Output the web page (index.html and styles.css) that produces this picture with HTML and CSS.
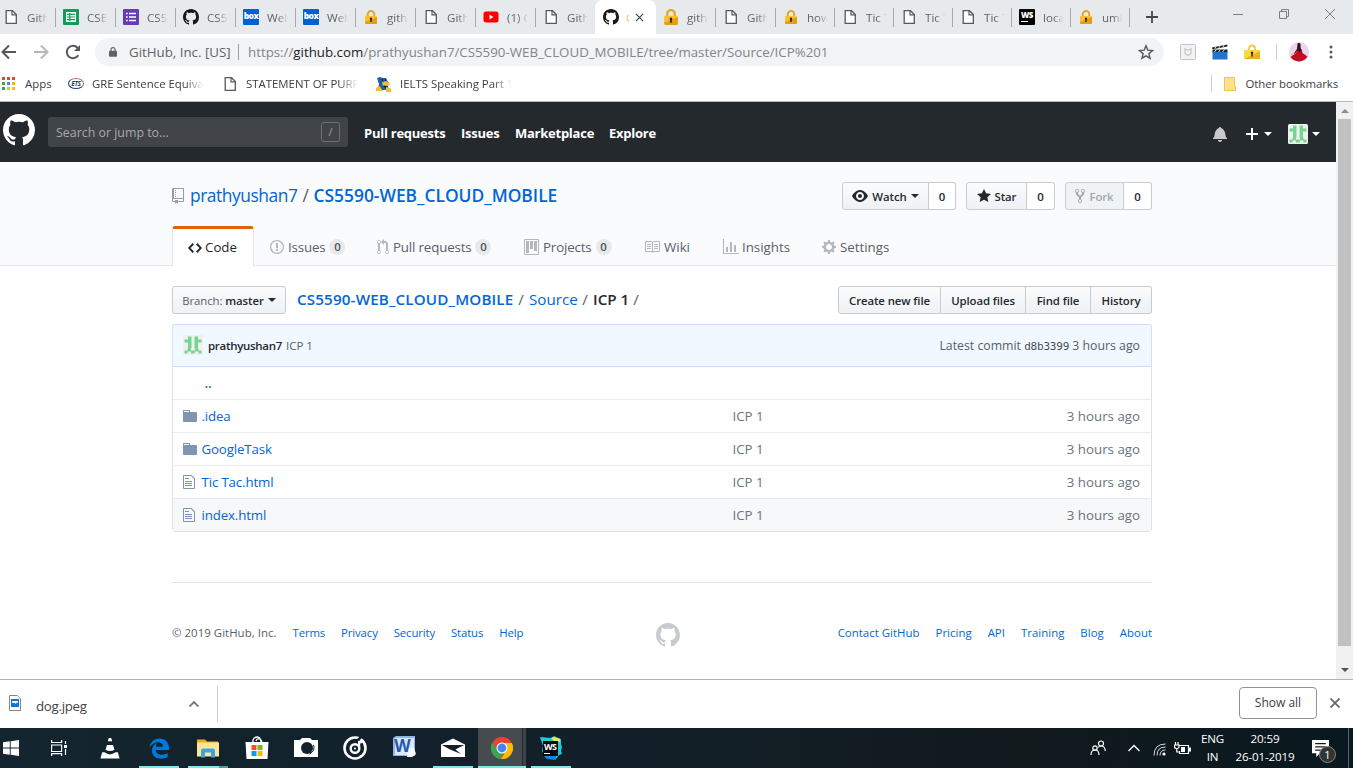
FILE: index.html
```html
<!DOCTYPE html>
<html lang="en">
<head>
<meta charset="utf-8">
<title>CS5590-WEB_CLOUD_MOBILE/Source/ICP 1</title>
<link rel="stylesheet" href="styles.css">
</head>
<body>
<svg class="sprite" aria-hidden="true">
  <symbol id="github" viewBox="0 0 16 16"><path fill-rule="evenodd" d="M8 0C3.58 0 0 3.58 0 8c0 3.54 2.29 6.53 5.47 7.59.4.07.55-.17.55-.38 0-.19-.01-.82-.01-1.49-2.01.37-2.53-.49-2.69-.94-.09-.23-.48-.94-.82-1.13-.28-.15-.68-.52-.01-.53.63-.01 1.08.58 1.23.82.72 1.21 1.87.87 2.33.66.07-.52.28-.87.51-1.07-1.78-.2-3.64-.89-3.64-3.95 0-.87.31-1.59.82-2.15-.08-.2-.36-1.02.08-2.12 0 0 .67-.21 2.2.82.64-.18 1.32-.27 2-.27.68 0 1.36.09 2 .27 1.53-1.04 2.2-.82 2.2-.82.44 1.1.16 1.92.08 2.12.51.56.82 1.27.82 2.15 0 3.07-1.87 3.75-3.65 3.95.29.25.54.73.54 1.48 0 1.07-.01 1.93-.01 2.2 0 .21.15.46.55.38A8.013 8.013 0 0 0 16 8c0-4.42-3.58-8-8-8z"/></symbol>
  <symbol id="page" viewBox="0 0 16 16"><path fill="#fff" stroke="#55585c" stroke-width="1.3" d="M3.2 1.7h6.3l3.8 3.8v8.8H3.2z"/><path fill="none" stroke="#55585c" stroke-width="1.2" d="M9 1.7v4.2h4.3"/></symbol>
  <symbol id="lock" viewBox="0 0 16 16"><path fill="none" stroke="#e9a61e" stroke-width="2" d="M4.7 8V5.2a3.3 3.3 0 0 1 6.6 0V8"/><rect x="2" y="7" width="12" height="8" rx="1" fill="#fbc02d"/><path fill="#e89c14" d="M2 13l12-5v6a1 1 0 0 1-1 1H3a1 1 0 0 1-1-1z"/><path fill="#222" d="M8 8.500a1.300 1.300 0 0 1 .7 2.300V13H7.300v-2.200A1.300 1.300 0 0 1 8 8.500z"/></symbol>
  <symbol id="sheet" viewBox="0 0 16 16"><rect width="16" height="16" rx="1" fill="#0f9d58"/><path fill="#fff" d="M3 3h10v10H3z"/><path stroke="#0f9d58" stroke-width="1.200" d="M4 5.300h8M4 8h8M4 10.700h8M6.800 4v8"/></symbol>
  <symbol id="form" viewBox="0 0 16 16"><rect width="16" height="16" rx="1" fill="#673ab7"/><path stroke="#fff" stroke-width="1.700" d="M3 4.500h1.700M6 4.500h7M3 8h1.700M6 8h7M3 11.500h1.700M6 11.500h7"/></symbol>
  <symbol id="avatar" viewBox="0 0 20 20"><rect width="20" height="20" rx="1.500" fill="#f0f0f0"/><path fill="#76d591" d="M5 1.500h3.500v12H5v-6H1.500V4.500H5zM11.500 1.500H15v3h3.500v3H15v6h-3.500zM1.500 15.500h3v3h-3zM4.500 13.500H8v3H4.500zM8 15.500h3.800v3H8zM12 13.500h3.500v3H12zM15.500 15.500h3v3h-3z"/></symbol>
  <symbol id="folder" viewBox="0 0 14 16"><path d="M13 4H7V3c0-.66-.31-1-1-1H1c-.55 0-1 .45-1 1v10c0 .55.45 1 1 1h12c.55 0 1-.45 1-1V5c0-.55-.45-1-1-1zM6 4H1V3h5v1z"/></symbol>
  <symbol id="file" viewBox="0 0 12 16"><path d="M6 5H2V4h4v1zM2 8h7V7H2v1zm0 2h7V9H2v1zm0 2h7v-1H2v1zm10-7.500V14c0 .55-.45 1-1 1H1c-.55 0-1-.45-1-1V2c0-.55.45-1 1-1h7.500L12 4.500zM11 5L8 2H1v12h10V5z"/></symbol>
</svg>

<div class="tabstrip">
  <div class="tab first"><svg><use href="#page"/></svg><span>Github</span></div>
  <div class="tab"><svg><use href="#sheet"/></svg><span>CSEE</span></div>
  <div class="tab"><svg><use href="#form"/></svg><span>CS55</span></div>
  <div class="tab"><svg><use href="#github"/></svg><span>CS55</span></div>
  <div class="tab"><b class="box-logo">box</b><span>Web</span></div>
  <div class="tab"><b class="box-logo">box</b><span>Web</span></div>
  <div class="tab"><svg><use href="#lock"/></svg><span>githu</span></div>
  <div class="tab"><svg><use href="#page"/></svg><span>Githu</span></div>
  <div class="tab"><svg viewBox="0 0 16 16"><rect x=".5" y="2.500" width="15" height="11" rx="2.500" fill="#f00"/><path fill="#fff" d="M6.500 5.500v5l4-2.500z"/></svg><span>(1) G</span></div>
  <div class="tab nosep"><svg><use href="#page"/></svg><span>Githu</span></div>
  <div class="tab active"><svg><use href="#github"/></svg><i class="sliver">C</i><svg class="close" viewBox="0 0 10 10"><path d="M1 1l8 8M9 1L1 9"/></svg></div>
  <div class="tab after"><svg viewBox="2 1 12 14"><use href="#lock" width="16" height="16"/></svg><span>githu</span></div>
  <div class="tab"><svg><use href="#page"/></svg><span>Githu</span></div>
  <div class="tab slim"><svg><use href="#lock"/></svg><span>how</span></div>
  <div class="tab slim"><svg><use href="#page"/></svg><span>Tic T</span></div>
  <div class="tab slim"><svg><use href="#page"/></svg><span>Tic T</span></div>
  <div class="tab slim"><svg><use href="#page"/></svg><span>Tic T</span></div>
  <div class="tab slim"><b class="ws-logo">WS<i></i></b><span>local</span></div>
  <div class="tab slim"><svg><use href="#lock"/></svg><span>uml</span></div>
  <svg class="newtab" viewBox="0 0 12 12"><path d="M6 0v12M0 6h12"/></svg>
  <div class="winctl">
    <svg viewBox="0 0 12 12"><path d="M1 6.500h10"/></svg>
    <svg viewBox="0 0 12 12"><path d="M1.500 3.500h7v7h-7zM3.500 3.500v-2h7v7h-2"/></svg>
    <svg viewBox="0 0 12 12"><path d="M1 1l10 10M11 1L1 11"/></svg>
  </div>
</div>

<div class="toolbar">
  <svg class="nav-ic" viewBox="0 0 16 16"><path d="M15 8H2M8 1.500L1.500 8 8 14.500"/></svg>
  <svg class="nav-ic off" viewBox="0 0 16 16"><path d="M1 8h13M8 1.500L14.500 8 8 14.500"/></svg>
  <svg class="nav-ic" viewBox="0 0 16 16"><path d="M13.300 11.300A6.200 6.200 0 1 1 12.500 3.700L14.200 6"/><path class="fill" d="M15 1v6H9z"/></svg>
  <div class="omnibox">
    <svg class="padlock" viewBox="0 0 10 12"><rect y="4.500" width="10" height="7.500" rx="1"/><path d="M2.500 5V3a2.500 2.500 0 0 1 5 0v2"/></svg>
    <span class="org">GitHub, Inc. [US]</span>
    <span class="url">https://<b>github.com</b>/prathyushan7/CS5590-WEB_CLOUD_MOBILE/tree/master/Source/ICP%201</span>
    <svg class="star" viewBox="0 0 16 16"><path d="M8 1.800l1.800 4.300 4.700.4-3.600 3.100 1.100 4.600L8 11.800l-4 2.400 1.100-4.600L1.500 6.500l4.700-.4z"/></svg>
  </div>
  <div class="exts">
    <svg viewBox="0 0 16 16"><rect x=".5" y=".5" width="15" height="15" rx="1" fill="#f1f2f3" stroke="#bfc3c7"/><path fill="none" stroke="#c6cacd" stroke-width="1.300" d="M5 5l3 1 3-1v4.500L8 11.500l-3-2z"/></svg>
    <svg viewBox="0 0 16 16"><path fill="#222" d="M0 3.500L15.300.5v2L.5 5.300z"/><path stroke="#ddd" d="M3 4.500l1-2M7 3.800l1-2M11 3l1-2"/><path fill="#222" d="M.5 5.500h15v3H.5z"/><path stroke="#e5e5e5" d="M2.500 8l2-2.500M6.500 8l2-2.500M10.500 8l2-2.500"/><path fill="#2474cf" d="M.5 8h15v7.500H.5z"/></svg>
    <svg viewBox="0 0 16 16"><path fill="none" stroke="#ecc94c" stroke-width="1.800" d="M5 7V4.500a3 3 0 0 1 6 0V7"/><path fill="#fadc3c" d="M0 6h16v9H0z"/><path fill="#f0b11c" d="M0 15L16 7v8z"/><path fill="#222" d="M8 7.500a1.400 1.400 0 0 1 .700 2.500v2.500H7.300V10A1.400 1.400 0 0 1 8 7.500z"/></svg>
    <i></i>
    <svg class="profile" viewBox="0 0 20 20"><circle cx="10" cy="10" r="10" fill="#ecd3ee"/><path fill="#c00f22" d="M8.500 7h4l1 4 5 3.500A10 10 0 0 1 1.500 15l5.500-4z"/><path fill="#35131a" d="M8.500 1.500c3-1.500 3.500 1 3 3.500L12.500 9l-2 1-2-2-2 3-2 1 3.500-5z"/><path fill="#e9c23c" d="M2 12l3-1v1.500l-3 1z"/></svg>
    <svg class="dots" viewBox="0 0 4 16"><circle cx="2" cy="3" r="1.500"/><circle cx="2" cy="8" r="1.500"/><circle cx="2" cy="13" r="1.500"/></svg>
  </div>
</div>

<div class="bookmarks">
  <svg class="apps" viewBox="0 0 13 13"><path fill="#ea4335" d="M0 0h3v3H0zM5 0h3v3H5zM10 0h3v3h-3z"/><path fill="#34a853" d="M0 5h3v3H0zM0 10h3v3H0z"/><path fill="#4285f4" d="M5 5h3v3H5z"/><path fill="#fbbc05" d="M10 5h3v3h-3zM5 10h3v3H5zM10 10h3v3h-3z"/></svg>
  <span class="bm-apps">Apps</span>
  <b class="ets">ETS</b>
  <span class="bm-gre fade">GRE Sentence Equivalence</span>
  <svg class="bm-page"><use href="#page"/></svg>
  <span class="bm-sop fade">STATEMENT OF PURPOSE</span>
  <svg class="bm-bear" viewBox="0 0 16 16"><path fill="#1e5fa8" d="M1 2l3-1 3 1 3 0 1.500 3L13 7l-2 1 2 6H2l1-6z"/><path fill="#f0bd3c" d="M6 6.500l4-1.500 4.500 3-3 2H7zM0 12l3.500-2L7 15H0zM10 11l5 1.500V16h-5z"/><path fill="#222" d="M6 3h1v2H6zM9 3h1v2H9zM7 9.500l5 .5-3 2z"/></svg>
  <span class="bm-ielts fade">IELTS Speaking Part 1</span>
  <div class="other"><svg viewBox="0 0 12 14"><path fill="#ffe28a" stroke="#eac64c" d="M.5.500h10v9h1v4H.5z"/></svg><span>Other bookmarks</span></div>
</div>

<div class="viewport">
<div class="page">
  <header class="gh-header">
    <svg class="mark"><use href="#github"/></svg>
    <div class="search"><span>Search or jump to...</span><kbd>/</kbd></div>
    <nav><a class="n1">Pull requests</a><a class="n2">Issues</a><a class="n3">Marketplace</a><a>Explore</a></nav>
    <div class="user">
      <svg class="bell" viewBox="0 0 14 16"><path d="M14 12v1H0v-1l.73-.58c.77-.77.81-2.550 1.190-4.420C2.690 3.230 6 2 6 2c0-.55.45-1 1-1s1 .45 1 1c0 0 3.390 1.230 4.160 5 .38 1.880.42 3.660 1.190 4.420l.66.58H14zm-7 4c1.110 0 2-.89 2-2H5c0 1.110.89 2 2 2z"/></svg>
      <svg class="plus" viewBox="0 0 12 16"><path d="M12 9H7v5H5V9H0V7h5V2h2v5h5z"/></svg><i class="caret"></i>
      <svg class="ava"><use href="#avatar"/></svg><i class="caret"></i>
    </div>
  </header>

  <div class="pagehead">
    <div class="title-row">
      <svg class="repo" viewBox="0 0 12 16"><path d="M4 9H3V8h1v1zm0-3H3v1h1V6zm0-2H3v1h1V4zm0-2H3v1h1V2zm8-1v12c0 .55-.45 1-1 1H6v2l-1.500-1.500L3 16v-2H1c-.55 0-1-.45-1-1V1c0-.55.45-1 1-1h10c.55 0 1 .45 1 1zm-1 10H1v2h2v-1h3v1h5v-2zm0-10H2v9h9V1z"/></svg>
      <h1><a class="owner">prathyushan7</a><i>/</i><a class="name">CS5590-WEB_CLOUD_MOBILE</a></h1>
      <div class="actions">
        <div class="group g-watch"><span class="btn"><svg class="i16" viewBox="0 0 16 16"><path fill-rule="evenodd" d="M8.060 2C3 2 0 8 0 8s3 6 8.060 6C13 14 16 8 16 8s-3-6-7.940-6zM8 12c-2.200 0-4-1.780-4-4 0-2.200 1.800-4 4-4 2.220 0 4 1.800 4 4 0 2.220-1.780 4-4 4zm2-4c0 1.110-.89 2-2 2-1.110 0-2-.89-2-2 0-1.110.89-2 2-2 1.110 0 2 .89 2 2z"/></svg>Watch<i class="caret"></i></span><span class="count">0</span></div>
        <div class="group g-star"><span class="btn"><svg class="i14" viewBox="0 0 14 16"><path d="M14 6l-4.900-.64L7 1 4.900 5.360 0 6l3.600 3.260L2.670 14 7 11.670 11.330 14l-.93-4.740L14 6z"/></svg>Star</span><span class="count">0</span></div>
        <div class="group g-fork"><span class="btn disabled"><svg class="i10" viewBox="0 0 10 16"><path fill-rule="evenodd" d="M8 1a1.993 1.993 0 0 0-1 3.720V6L5 8 3 6V4.720A1.993 1.993 0 0 0 2 1a1.993 1.993 0 0 0-1 3.720V6.500l3 3v1.780A1.993 1.993 0 0 0 5 15a1.993 1.993 0 0 0 1-3.720V9.500l3-3V4.720A1.993 1.993 0 0 0 8 1zM2 4.200C1.340 4.200.8 3.650.8 3c0-.65.55-1.200 1.200-1.200.65 0 1.200.55 1.200 1.200 0 .65-.55 1.200-1.200 1.200zm3 10c-.66 0-1.200-.55-1.200-1.200 0-.65.55-1.200 1.200-1.200.65 0 1.200.55 1.200 1.200 0 .65-.55 1.200-1.200 1.200zm3-10c-.66 0-1.200-.55-1.200-1.200 0-.65.55-1.200 1.200-1.200.65 0 1.200.55 1.200 1.200 0 .65-.55 1.200-1.200 1.200z"/></svg>Fork</span><span class="count">0</span></div>
      </div>
    </div>
    <div class="reponav">
      <a class="selected"><svg class="i14" viewBox="0 0 14 16"><path d="M9.500 3L8 4.500 11.500 8 8 11.500 9.500 13 14 8 9.500 3zm-5 0L0 8l4.500 5L6 11.500 2.500 8 6 4.500 4.500 3z"/></svg>Code</a>
      <a class="t-issues"><svg class="i14" viewBox="0 0 14 16"><path fill-rule="evenodd" d="M7 2.300c3.140 0 5.700 2.560 5.700 5.700s-2.560 5.700-5.700 5.700A5.710 5.710 0 0 1 1.300 8c0-3.140 2.560-5.700 5.700-5.700zM7 1C3.140 1 0 4.140 0 8s3.140 7 7 7 7-3.140 7-7-3.140-7-7-7zm1 3H6v5h2V4zm0 6H6v2h2v-2z"/></svg>Issues<em>0</em></a>
      <a class="t-pulls"><svg class="i12" viewBox="0 0 12 16"><path fill-rule="evenodd" d="M11 11.280V5c-.03-.78-.34-1.470-.94-2.060C9.460 2.350 8.780 2.030 8 2H7V0L4 3l3 3V4h1c.27.02.48.11.69.31.21.2.3.42.31.69v6.280A1.993 1.993 0 0 0 10 15a1.993 1.993 0 0 0 1-3.720zm-1 2.920c-.66 0-1.200-.55-1.200-1.200 0-.65.55-1.200 1.200-1.200.65 0 1.200.55 1.200 1.200 0 .65-.55 1.200-1.200 1.200zM4 3c0-1.110-.89-2-2-2a1.993 1.993 0 0 0-1 3.720v6.560A1.993 1.993 0 0 0 2 15a1.993 1.993 0 0 0 1-3.720V4.720c.59-.34 1-.98 1-1.720zm-.8 10c0 .66-.55 1.200-1.200 1.200-.65 0-1.200-.55-1.200-1.200 0-.65.55-1.200 1.200-1.200.65 0 1.200.55 1.200 1.200zM2 4.200C1.340 4.200.8 3.650.8 3c0-.65.55-1.200 1.200-1.200.65 0 1.200.55 1.200 1.200 0 .65-.55 1.200-1.200 1.200z"/></svg>Pull requests<em>0</em></a>
      <a class="t-projects"><svg class="i15" viewBox="0 0 15 16"><path fill-rule="evenodd" d="M10 12h3V2h-3v10zm-4-2h3V2H6v8zm-4 4h3V2H2v12zm-1 1h13V1H1v14zM14 0H1a1 1 0 0 0-1 1v14a1 1 0 0 0 1 1h13a1 1 0 0 0 1-1V1a1 1 0 0 0-1-1z"/></svg>Projects<em>0</em></a>
      <a class="t-wiki"><svg class="i16" viewBox="0 0 16 16"><path fill-rule="evenodd" d="M3 5h4v1H3V5zm0 3h4V7H3v1zm0 2h4V9H3v1zm11-5h-4v1h4V5zm0 2h-4v1h4V7zm0 2h-4v1h4V9zm2-6v9c0 .55-.45 1-1 1H9.500l-1 1-1-1H2c-.55 0-1-.45-1-1V3c0-.55.45-1 1-1h5.500l1 1 1-1H15c.55 0 1 .45 1 1zm-8 .5L7.500 3H2v9h6V3.500zm7-.5H9.500l-.5.5V12h6V3z"/></svg>Wiki</a>
      <a class="t-insights"><svg class="i16" viewBox="0 0 16 16"><path d="M16 14v1H0V0h1v14h15zM5 13H3V8h2v5zm4 0H7V3h2v10zm4 0h-2V6h2v7z"/></svg>Insights</a>
      <a class="t-settings"><svg class="i14" viewBox="0 0 14 16"><path fill-rule="evenodd" d="M14 8.770v-1.600l-1.940-.64-.45-1.090.88-1.840-1.130-1.130-1.810.91-1.090-.45-.69-1.920h-1.600l-.63 1.940-1.110.45-1.840-.88-1.130 1.130.91 1.810-.45 1.090L0 7.230v1.590l1.940.64.45 1.090-.88 1.840 1.130 1.130 1.810-.91 1.090.45.69 1.920h1.590l.63-1.940 1.110-.45 1.840.88 1.130-1.130-.92-1.810.47-1.090L14 8.750v.02zM7 11c-1.660 0-3-1.340-3-3s1.340-3 3-3 3 1.340 3 3-1.340 3-3 3z"/></svg>Settings</a>
    </div>
  </div>

  <main>
    <div class="filenav">
      <span class="btn branch"><i>Branch:</i> master<i class="caret"></i></span>
      <div class="crumbs"><a class="root">CS5590-WEB_CLOUD_MOBILE</a><i>/</i><a class="src">Source</a><i>/</i><strong>ICP 1</strong><i>/</i></div>
      <div class="btngroup"><span class="btn b1">Create new file</span><span class="btn b2">Upload files</span><span class="btn b3">Find file</span><span class="btn b4">History</span></div>
    </div>
    <div class="files">
      <div class="commit"><svg><use href="#avatar"/></svg><b>prathyushan7</b><span>ICP 1</span><p>Latest commit <code>d8b3399</code> 3 hours ago</p></div>
      <div class="row up"><a>..</a></div>
      <div class="row"><svg class="i14"><use href="#folder"/></svg><a>.idea</a><span>ICP 1</span><time>3 hours ago</time></div>
      <div class="row"><svg class="i14"><use href="#folder"/></svg><a>GoogleTask</a><span>ICP 1</span><time>3 hours ago</time></div>
      <div class="row"><svg class="i12"><use href="#file"/></svg><a>Tic Tac.html</a><span>ICP 1</span><time>3 hours ago</time></div>
      <div class="row hover"><svg class="i12"><use href="#file"/></svg><a>index.html</a><span>ICP 1</span><time>3 hours ago</time></div>
    </div>
    <footer>
      <div class="fl"><span>© 2019 GitHub, Inc.</span><a>Terms</a><a>Privacy</a><a>Security</a><a>Status</a><a>Help</a></div>
      <svg><use href="#github"/></svg>
      <div class="fr"><a>Contact GitHub</a><a>Pricing</a><a>API</a><a>Training</a><a>Blog</a><a>About</a></div>
    </footer>
  </main>
</div>
<div class="scroll"><i class="up"></i><div class="thumb"></div><i class="down"></i></div>
</div>

<div class="shelf">
  <svg class="jpeg" viewBox="0 0 12 16"><path fill="#fff" stroke="#858585" d="M.5.500h8l3 3v12H.5z"/><path fill="#ddd" d="M8.500.5v3h3z"/><path fill="#0b79d8" d="M2 4h8v8H2z"/><path fill="#fff" d="M3 6h6v2L8 7.200 6.700 9 5.500 7.400 4.300 8.200 3 7.500z"/></svg>
  <span>dog.jpeg</span>
  <svg class="chev" viewBox="0 0 10 6"><path d="M.5 5.500L5 1l4.500 4.500"/></svg>
  <i></i>
  <div class="showall">Show all</div>
  <svg class="shelf-x" viewBox="0 0 10 10"><path d="M.5.500l9 9M9.500.500l-9 9"/></svg>
</div>

<div class="taskbar">
  <div class="task start"><svg viewBox="0 0 16 16"><path fill="#fff" d="M0 2.300l6.800-1v6.300H0zM7.700 1.200L16 0v7.600H7.700zM0 8.500h6.800v6.300L0 13.800zM7.700 8.500H16V16l-8.300-1.200z"/></svg></div>
  <div class="task view"><svg viewBox="0 0 16 16"><path fill="none" stroke="#fff" stroke-width="1.200" d="M.6 0v2.500h10V0M.6 5h10v6.500H.6zM.6 16v-2.300h10V16M14.500 1v3M14.500 9v6"/><path fill="#fff" d="M13 5h3v3h-3z"/></svg></div>
  <div class="task"><svg viewBox="0 0 20 22"><path fill="#fff" d="M8.700 0h2.600l1 3.500H7.700zM6.800 7.300h6.400l1.500 5q-4.700 2.500-9.400 0zM1.800 15H4.200Q10 19.500 15.800 15h2.400l1.800 6.500H0z"/></svg></div>
  <div class="task open"><svg viewBox="0 0 20 20"><path fill="#0078d7" d="M.5 8.800C1.400 3.500 5 0 10.300 0 16.500 0 20 4.300 20 9.200v2.200H6.800c0 5.500 7.800 5.900 11.900 3.200v4C12.500 22 3 20 3 12.200c0-3.700 2-6.500 5.500-7.700C7.300 5.700 6.900 7 6.900 8.200h7c0-6.300-9-5.900-13.400.6z"/></svg></div>
  <div class="task open split"><svg class="explorer" viewBox="0 0 22 20"><path fill="#e8ad24" d="M0 1h8l2 2h11v3H0z"/><path fill="#ffe498" d="M0 4h22v14H0z"/><path fill="#36a8df" d="M4 19v-7q0-2 2-2h10q2 0 2 2v7h-4v-5H8v5z"/></svg></div>
  <div class="task"><svg class="big" viewBox="0 0 24 24"><path fill="none" stroke="#fff" stroke-width="1.300" d="M8 7V4q1-3 4-3 4 0 4 6M11 5q1-3 4-2 2 1 2 4"/><path fill="#fff" d="M.5 6h23l-1 17h-21z"/><path fill="#f25022" d="M6.500 9h5v5h-5z"/><path fill="#7fba00" d="M12.500 9h5v5h-5z"/><path fill="#00a4ef" d="M6.500 15h5v5h-5z"/><path fill="#ffb900" d="M12.500 15h5v5h-5z"/></svg></div>
  <div class="task"><svg class="big" viewBox="0 0 24 24"><path fill="#fff" d="M0 4h6l2-2h8l2 2h6v17H0z"/><circle cx="13" cy="12" r="6" fill="#12222a"/><path fill="none" stroke="#12222a" d="M19.500 9q2 6-4 9"/></svg></div>
  <div class="task"><svg class="big" viewBox="0 0 24 24"><circle cx="12" cy="12" r="10.500" fill="none" stroke="#fff" stroke-width="2.600"/><circle cx="12" cy="12.500" r="4.300" fill="none" stroke="#fff" stroke-width="2.400"/><path stroke="#12212a" stroke-width="2.500" d="M14 5l5-5"/><path fill="#fff" d="M15 5l6-1v2.500l-3.800 1V12H15z"/><circle cx="12" cy="12.500" r="1" fill="#fff"/></svg></div>
  <div class="task"><svg class="big" viewBox="0 0 24 24"><path fill="#8fb4e8" d="M1 2l3-2h19v20H1z"/><path fill="#dce9fa" d="M3 2h19v17H3z"/><path fill="#f7fafe" d="M16 12h6l2 6-4 3h-5z"/></svg><b class="word">W</b></div>
  <div class="task open"><svg class="big" viewBox="0 0 24 24"><path fill="#fff" d="M0 8.500l12-6 12 6V21H0z"/><path fill="#13202a" d="M1 9h22l-8.500 4.500L20 18 9 13.500z"/></svg></div>
  <div class="task open chrome"><svg class="big" viewBox="0 0 24 24"><circle cx="12" cy="12" r="11" fill="#ea4335"/><path fill="#34a853" d="M2.500 6.500l5 8 5 2.500L11 23A11 11 0 0 1 2.500 6.500z"/><path fill="#fbbc05" d="M12 7h9.800A11 11 0 0 1 11 23l5-8z"/><circle cx="12" cy="12" r="5.500" fill="#fff"/><circle cx="12" cy="12" r="4.400" fill="#4285f4"/></svg></div>
  <div class="task open"><svg class="big" viewBox="0 0 24 24"><path fill="#20c9dc" d="M1 1l11 1 3-2 7 3v5l1 3-1 4 1 3-3 1-3 4-10-1-4-7 1-5z"/><path fill="#e8ef4b" d="M12 2l3-1 6 2v3l-6-1z"/><path fill="#0b88e0" d="M5 20l12 0v4l-9-1z"/><path fill="#080808" d="M4 5h15v15H4z"/></svg><b class="webstorm">WS<i></i></b></div>
  <div class="tray">
    <svg class="people" viewBox="0 0 16 16"><g fill="none" stroke="#fff" stroke-width="1.200"><circle cx="11" cy="3.500" r="2.500"/><circle cx="5" cy="8" r="2.200"/><path d="M1 15q0-5 4-5t4 5M8 7.500q1-1.500 3-1.500 4 0 4.300 5"/></g></svg>
    <svg class="up-ic" viewBox="0 0 12 8"><path fill="none" stroke="#fff" stroke-width="1.300" d="M.5 7L6 1.500 11.500 7"/></svg>
    <svg class="wifi" viewBox="0 0 13 13"><g fill="none" stroke="#d7dcde"><path d="M1 12.500Q1 1 12.500 1M4 12.500Q4 4 12.500 4M7 12.500Q7 7 12.500 7"/></g><circle cx="11" cy="11" r="1.600" fill="#fff"/></svg>
    <svg class="batt" viewBox="0 0 17 13"><path fill="none" stroke="#fff" stroke-width="1.200" d="M5.500 3.500h9v8h-9V9M1.500 0v2.500M4 0v2.500M.5 3H5v2.500q-2 2.500-4.500 0zM2.800 7v3h2"/><path fill="#fff" d="M7 5h4v5H7zM15 5.500h2v4h-2z"/></svg>
    <div class="lang">ENG<br>IN</div>
    <div class="clock">20:59<br>26-01-2019</div>
    <div class="notif"><svg viewBox="0 0 16 16"><path fill="#fff" d="M0 0h16v12.500H7.500L4 16v-3.500H0z"/><path stroke="#101b20" stroke-width="1.200" d="M3 3.500h10M3 6.500h10M3 9.500h6"/></svg><b>1</b></div>
    <i></i>
  </div>
</div>
</body>
</html>
```

FILE: styles.css
```css
* { box-sizing: border-box; }
body { margin: 0; width: 1353px; height: 768px; overflow: hidden; background: #fff; color: #24292e; font: 13.3px/21px "Open Sans", "Noto Sans", sans-serif; display: flex; flex-direction: column; white-space: nowrap; }
i, em { font-style: normal; }
svg { display: block; flex: none; }
.sprite { position: absolute; width: 0; height: 0; }
.i10 { width: 10px; height: 16px; }
.i12 { width: 12px; height: 16px; }
.i14 { width: 14px; height: 16px; }
.i15 { width: 15px; height: 16px; }
.i16 { width: 16px; height: 16px; }
.caret { width: 0; height: 0; border: 4px solid transparent; border-top-color: currentColor; border-bottom: 0; }

/* Browser tabs */
.tabstrip { height: 34px; flex: none; display: flex; background: #e7eaed; }
.tab { width: 60px; height: 34px; flex: none; padding-left: 8px; display: flex; align-items: center; color: #5f6368; font-size: 11.6px; background: linear-gradient(#a5a8ab, #a5a8ab) right 0 top 8px / 1px 19px no-repeat; }
.tab svg { width: 16px; height: 16px; margin-right: 8px; fill: #191717; }
.tab span { width: 21px; overflow: hidden; -webkit-mask-image: linear-gradient(90deg, #000 50%, transparent); mask-image: linear-gradient(90deg, #000 50%, transparent); }
.tab.first { width: 56px; padding-left: 3px; }
.tab:not(.first) { padding-left: 7px; }
.tab.slim { width: 59px; }
.tab.nosep { width: 59px; background: none; }
.tab.active { background: #fff; width: 61px; padding-left: 8px; border-radius: 8px 8px 0 0; }
.tab.active svg { margin-right: 7px; }
.tab.active .sliver { width: 3px; margin-right: 6px; overflow: hidden; color: #f0c088; }
.tab.active .close { width: 9px; height: 9px; margin: 0; stroke: #45494d; stroke-width: 1.4; }
.box-logo, .ws-logo { width: 16px; height: 16px; margin-right: 8px; text-align: center; background: #0061d5; color: #fff; font-size: 8.5px; line-height: 14px; border-radius: 1px; letter-spacing: -.5px; font-weight: 800; }
.ws-logo { background: #000; font-size: 8px; line-height: 11px; }
.ws-logo i { display: block; width: 7px; height: 1px; margin: 1px 0 0 2px; background: #fff; }
.newtab { width: 12px; height: 12px; margin: 11px 0 0 16px; stroke: #45494d; stroke-width: 1.8; }
.winctl { margin-left: auto; padding: 8px 17px 0 0; display: flex; gap: 34px; }
.winctl svg { width: 12px; height: 12px; fill: none; stroke: #7c7f82; }

/* Address bar */
.toolbar { height: 36px; flex: none; display: flex; align-items: center; }
.nav-ic { width: 16px; height: 16px; margin-right: 16px; fill: none; stroke: #55585c; stroke-width: 2; }
.nav-ic:first-child { margin-left: 1px; }
.nav-ic .fill { fill: #55585c; stroke: none; }
.nav-ic.off { stroke: #b5b7b9; }
.nav-ic:nth-child(3) { margin-right: 14px; }
.omnibox { width: 1069px; height: 28px; padding: 0 10px 0 14px; border-radius: 14px; background: #f1f3f4; display: flex; align-items: center; }
.padlock { width: 8px; height: 12px; margin-right: 12px; fill: #5f6368; }
.padlock path { fill: none; stroke: #5f6368; stroke-width: 1.5; }
.org { width: 110px; padding-right: 8px; border-right: 1px solid #9a9da0; height: 16px; line-height: 16px; color: #5f6368; }
.url { margin-left: 9px; color: #80868b; }
.url b { font-weight: 400; color: #202124; }
.star { width: 16px; height: 16px; margin-left: auto; fill: none; stroke: #55585c; stroke-width: 1.4; }
.exts { margin-left: 16px; display: flex; align-items: center; gap: 16px; }
.exts svg { width: 16px; height: 16px; }
.exts i { width: 1px; height: 16px; background: #ccc; }
.exts .profile { width: 20px; height: 20px; margin-left: -4px; }
.exts .dots { width: 4px; margin-left: 4px; fill: #55585c; }

/* Bookmarks bar */
.bookmarks { height: 32px; padding-bottom: 4px; flex: none; display: flex; align-items: center; border-bottom: 1px solid #b6b9bc; font-size: 11.4px; color: #3c4043; }
.fade { overflow: hidden; -webkit-mask-image: linear-gradient(90deg, #000 82%, transparent 98%); mask-image: linear-gradient(90deg, #000 82%, transparent 98%); }
.apps { width: 13px; height: 13px; margin: 0 10px 0 2px; }
.bm-apps { width: 43px; }
.ets { width: 16px; height: 11px; border-radius: 50%; border: 1px solid #c26468; border-left-color: #1e3f7e; border-bottom-color: #1e3f7e; font-size: 6.5px; line-height: 9px; text-align: center; color: #1e3f7e; font-style: italic; margin-right: 8px; letter-spacing: -.3px; }
.bm-gre { width: 114px; }
.bm-page { width: 16px; height: 16px; margin: 0 8px 0 16px; }
.bm-sop { width: 114px; }
.bm-bear { width: 16px; height: 16px; margin: 0 8px 0 16px; }
.bm-ielts { width: 114px; }
.other { margin-left: auto; height: 17px; padding: 0 15px 0 12px; border-left: 1px solid #ccc; display: flex; align-items: center; gap: 10px; letter-spacing: -.07px; }
.other svg { width: 12px; height: 14px; }

/* Web page */
.viewport { height: 577px; flex: none; display: flex; }
.page { width: 1336px; }
.scroll { width: 17px; background: #f1f1f1; display: flex; flex-direction: column; align-items: center; }
.scroll i { border: 4px solid transparent; }
.scroll .up { border-top: 0; border-bottom-color: #8b8b8b; margin: 7px 0 6px; }
.scroll .down { border-bottom: 0; border-top-color: #505050; margin-top: 22px; }
.thumb { width: 13px; height: 527px; background: #c1c1c1; }
.gh-header { height: 60px; padding-left: 3px; background: #24292e; color: #fff; display: flex; align-items: center; }
.mark { width: 32px; height: 32px; fill: #fff; margin: -4px 13px 0 0; }
.search { width: 300px; height: 30px; padding: 0 8px; border-radius: 3px; background: #404448; color: #a6a8aa; display: flex; justify-content: space-between; align-items: center; font-size: 12.4px; }
.search kbd { width: 19px; height: 20px; border: 1px solid #6d7174; border-radius: 3px; text-align: center; font: 11px/18px "Open Sans", sans-serif; color: #9b9ea0; }
.gh-header nav { display: flex; margin: 2px 0 0 16px; font-weight: 700; font-size: 13px; }
.gh-header nav a { color: #fff; letter-spacing: -.25px; }
.n1 { width: 97px; } .n2 { width: 54px; } .n3 { width: 94px; }
.user { margin-left: auto; padding: 3px 16px 0 0; display: flex; align-items: center; }
.user svg { fill: #fff; }
.user .bell { width: 14px; height: 16px; margin-right: 19px; fill: #c8c9cb; }
.user .plus { width: 12px; height: 16px; margin-right: 6px; }
.user .ava { width: 20px; height: 20px; margin: 0 4px 0 16px; }

.pagehead { height: 104px; padding: 20px 184px 0 172px; background: #fafbfc; border-bottom: 1px solid #e1e4e8; }
.title-row { height: 28px; display: flex; align-items: center; }
.repo { width: 12px; height: 16px; margin-right: 6px; fill: #999ea3; }
h1 { margin: -2px 0 0; font-size: 17.4px; font-weight: 400; line-height: 28px; color: #586069; display: flex; }
a { color: #0366d6; }
.owner { width: 108px; letter-spacing: -.45px; }
h1 i { width: 15.5px; text-align: center; }
.name { font-weight: 600; }
.actions { margin-left: auto; display: flex; gap: 10px; }
.group { display: flex; height: 28px; }
.btn, .count { display: flex; align-items: center; justify-content: center; height: 28px; border: 1px solid #c8cbcf; font-size: 11.4px; letter-spacing: -.1px; font-weight: 600; color: #24292e; }
.btn { border-radius: 3px; background: linear-gradient(#fafbfc, #eff3f6 90%); }
.btn svg { fill: currentColor; margin-right: 4px; }
.btn .caret { margin-left: 4px; }
.group .btn { border-radius: 3px 0 0 3px; }
.group .count { flex: 1; border-left: 0; border-radius: 0 3px 3px 0; background: #fff; }
.g-watch { width: 114px; } .g-watch .btn { width: 87px; }
.g-star { width: 89px; } .g-star .btn { width: 61px; }
.g-fork { width: 87px; } .g-fork .btn { width: 59px; }
.btn.disabled { color: #a3a7ab; background: #eff3f6; }

.reponav { display: flex; margin-top: 16px; height: 40px; }
.reponav a { color: #586069; display: flex; align-items: center; padding: 2px 0 0 17px; }
.reponav svg { fill: #b4b8bc; margin-right: 4px; }
.reponav em { margin-left: 4px; width: 16px; height: 16px; border-radius: 10px; background: #e7e9eb; font-size: 11.4px; line-height: 16px; font-weight: 600; text-align: center; color: #4c535a; }
.reponav .selected { width: 82px; padding: 0 0 0 15px; color: #24292e; background: #fff; border: 1px solid #e1e4e8; border-top: 3px solid #e36209; border-bottom: 0; border-radius: 3px 3px 0 0; }
.reponav .selected svg { fill: #24292e; margin-right: 3px; }
.reponav .t-issues { width: 106px; padding-left: 16px; letter-spacing: -.15px; }
.reponav .t-pulls { width: 147px; letter-spacing: -.15px; }
.reponav .t-projects { width: 120px; letter-spacing: -.15px; }
.t-wiki { width: 79px; }
.t-insights { width: 99px; }
.reponav .t-insights svg { margin-right: 3px; }

main { padding: 20px 184px 0 172px; }
.filenav { height: 28px; display: flex; align-items: center; }
.branch { width: 114px; }
.branch i:first-child { font-weight: 400; color: #586069; margin-right: 3px; }
.crumbs { margin: -2px 0 0 11px; font-size: 15.2px; color: #586069; display: flex; }
.crumbs i { width: 14px; text-align: center; }
.root { width: 217px; font-weight: 600; letter-spacing: .15px; }
.src { width: 49px; margin-left: 1px; }
.crumbs strong { width: 36px; margin-left: 1px; font-weight: 600; color: #24292e; }
.btngroup { margin-left: auto; display: flex; }
.btngroup .btn { border-radius: 0; border-left: 0; }
.btngroup .b1 { width: 103px; border-left: 1px solid #c8cbcf; border-radius: 3px 0 0 3px; }
.b2 { width: 85px; } .b3 { width: 65px; }
.btngroup .b4 { width: 61px; border-radius: 0 3px 3px 0; }
.files { margin-top: 10px; border: 1px solid #dfe2e5; border-radius: 3px; }
.commit { height: 43px; margin: -1px -1px 0; padding: 0 11px; border: 1px solid #c8e1ff; border-radius: 3px 3px 0 0; background: #f1f8ff; display: flex; align-items: center; font-size: 11.5px; color: #586069; }
.commit svg { width: 20px; height: 20px; margin-top: -2px; margin-left: -1px; }
.commit b { width: 74px; margin: 0 4px 0 5px; font-weight: 600; letter-spacing: -.3px; color: #24292e; }
.commit p { margin: 0 0 0 auto; font-size: 12.3px; }
.commit code { font: 11px "DejaVu Sans Mono", monospace; letter-spacing: -.2px; color: #444d56; }
.row { height: 33px; padding: 0 11px 0 10px; border-top: 1px solid #eaecef; display: grid; grid-template-columns: 18.5px 531px 1fr auto; align-items: center; color: #6a737d; }
.row a { letter-spacing: -.15px; }
.row svg { fill: #8096b0; }
.row.up { height: 32px; border-top: 0; }
.row.up a { grid-column: 2; padding-left: 3px; font-weight: 600; }
.hover { background: #f6f8fa; }
footer { margin-top: 50px; padding-top: 40px; border-top: 1px solid #e1e4e8; display: flex; justify-content: space-between; font-size: 11.4px; line-height: 19px; color: #586069; }
footer div { width: 372px; display: flex; gap: 16px; }
footer .fl span { letter-spacing: .05px; }
footer .fl a { letter-spacing: -.14px; }
footer .fr { justify-content: flex-end; letter-spacing: .03px; }
footer svg { width: 24px; height: 24px; fill: #c6cbd1; margin-left: 12px; }

/* Download shelf */
.shelf { height: 49px; flex: none; padding-left: 9px; border-top: 1px solid #b3b3b3; display: flex; align-items: center; color: #444; }
.jpeg { width: 12px; height: 16px; margin: -2px 15px 0 0; }
.shelf span { width: 153px; margin-top: 4px; letter-spacing: -.3px; }
.chev { width: 10px; height: 6px; fill: none; stroke: #777; stroke-width: 1.8; }
.shelf > i { width: 1px; height: 36px; margin-left: 18px; background: #ccc; }
.showall { margin-left: auto; width: 78px; height: 32px; margin-top: -2px; border: 1px solid #909396; border-radius: 4px; text-align: center; font-size: 12px; line-height: 30px; font-weight: 500; color: #3c4043; }
.shelf-x { width: 10px; height: 10px; margin: -2px 13px 0 13px; stroke: #666; stroke-width: 1.7; }

/* Taskbar */
.taskbar { height: 40px; flex: none; display: flex; color: #fff; background: linear-gradient(90deg, #13252e, #12202a 40%, #11191d 76%, #09191f); }
.task { width: 49px; height: 40px; flex: none; display: grid; place-items: center; }
.task svg { width: 20px; height: 21px; grid-area: 1 / 1; }
.task svg.explorer { width: 22px; }
.task .big { width: 24px; height: 24px; }
.task.start { width: 35px; padding-right: 13px; }
.task.start svg { width: 16px; height: 16px; }
.task.view { width: 50px; padding-right: 3px; }
.task.view svg { width: 16px; height: 16px; }
.open { background: linear-gradient(#81e6ec, #81e6ec) 5px 38px / 40px 2px no-repeat; }
.split { background: linear-gradient(90deg, #81e6ec 31px, #529aa2 31px) 5px 38px / 40px 2px no-repeat; }
.task.chrome { background: linear-gradient(#81e6ec, #81e6ec) 1px 38px / 48px 2px no-repeat, linear-gradient(90deg, transparent 1px, #454b4e 1px, #454b4e 45px, #20292e 45px, #20292e 46px, #3c4447 46px, #3c4447 49px); }
.word, .webstorm { grid-area: 1 / 1; z-index: 1; font-size: 17px; line-height: 18px; }
.word { color: #2459ae; margin: -4px 2px 0 0; }
.webstorm { font-size: 9px; line-height: 9px; width: 13px; letter-spacing: -.6px; }
.webstorm i { display: block; width: 6px; height: 1px; background: #fff; margin-top: 2px; }
.tray { margin-left: auto; display: flex; align-items: center; font-size: 11.6px; line-height: 18px; text-align: center; }
.people { width: 16px; height: 16px; margin-right: 22px; }
.up-ic { width: 12px; height: 8px; margin-right: 13px; }
.wifi { width: 13px; height: 13px; margin: 2px 8px 0 0; }
.batt { width: 17px; height: 13px; margin-right: 8px; }
.lang { width: 27px; letter-spacing: -.2px; }
.clock { width: 78px; letter-spacing: -.15px; margin-top: -1px; }
.notif { width: 41px; padding-left: 8px; position: relative; }
.notif svg { width: 17px; height: 17px; }
.notif b { position: absolute; left: 15px; top: 6px; width: 17px; height: 17px; border: 1px solid #888; border-radius: 50%; background: #333; font-size: 11px; line-height: 15px; font-weight: 400; }
.tray > i { width: 1px; height: 40px; margin: 0 4px 0 3px; background: #59656b; }
```
